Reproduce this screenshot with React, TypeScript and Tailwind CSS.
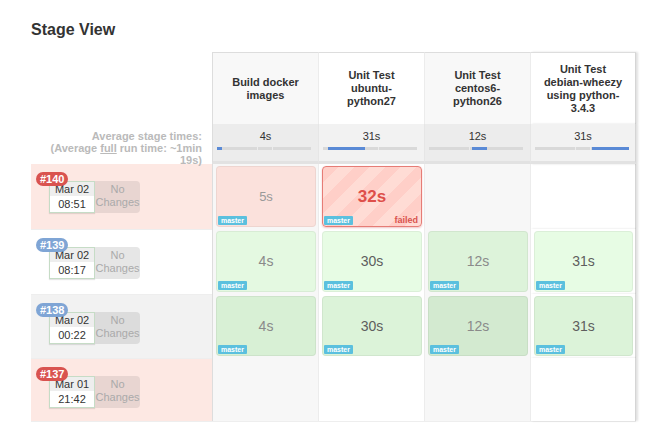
import React from 'react';

type Cell = { t: string; kind: 'empty' | 'ok' | 'failed' | 'faded' };

const stages = [
  'Build docker images',
  'Unit Test ubuntu-python27',
  'Unit Test centos6-python26',
  'Unit Test debian-wheezy using python-3.4.3',
];

const avgs = [
  { t: '4s', off: 0, w: 5 },
  { t: '31s', off: 5, w: 37 },
  { t: '12s', off: 43, w: 15 },
  { t: '31s', off: 57, w: 37 },
];

const runs = [
  {
    id: '#140', date: 'Mar 02', time: '08:51', failed: true, h: 'h-[65px]',
    rowBg: 'bg-[#fde8e3]', noCh: 'bg-[#e8d5d1]',
    cells: [{ t: '5s', kind: 'faded' }, { t: '32s', kind: 'failed' }, { t: '', kind: 'empty' }, { t: '', kind: 'empty' }] as Cell[],
  },
  {
    id: '#139', date: 'Mar 02', time: '08:17', failed: false, h: 'h-[65px]',
    rowBg: 'bg-white', noCh: 'bg-[#e6e6e6]',
    cells: [{ t: '4s', kind: 'ok' }, { t: '30s', kind: 'ok' }, { t: '12s', kind: 'ok' }, { t: '31s', kind: 'ok' }] as Cell[],
  },
  {
    id: '#138', date: 'Mar 02', time: '00:22', failed: false, h: 'h-[64px]',
    rowBg: 'bg-[#f2f2f2]', noCh: 'bg-[#dcdcdc]',
    cells: [{ t: '4s', kind: 'ok' }, { t: '30s', kind: 'ok' }, { t: '12s', kind: 'ok' }, { t: '31s', kind: 'ok' }] as Cell[],
  },
  {
    id: '#137', date: 'Mar 01', time: '21:42', failed: true, h: 'h-[64px]',
    rowBg: 'bg-[#fde8e3]', noCh: 'bg-[#e8d5d1]',
    cells: [{ t: '', kind: 'empty' }, { t: '', kind: 'empty' }, { t: '', kind: 'empty' }, { t: '', kind: 'empty' }] as Cell[],
  },
];

// card colours per run row and column
const okBg = [
  ['', '', '', ''],
  ['bg-[#e4f9e1]', 'bg-[#e7fce4]', 'bg-[#ddf3da]', 'bg-[#e7fce4]'],
  ['bg-[#d8f0d5]', 'bg-[#dcf3d9]', 'bg-[#d3ead0]', 'bg-[#dcf3d9]'],
];

function Master() {
  return (
    <span className="absolute left-[1px] bottom-[1px] bg-[#5bc0de] text-white text-[7px] font-bold leading-[9px] px-[3px] rounded-[1px]">
      master
    </span>
  );
}

function StageCell({ cell, col, row }: { cell: Cell; col: number; row: number }) {
  const colBg = col % 2 === 0 ? 'bg-[#f7f7f7]' : 'bg-white';
  const edge = col === 0 ? 'border-l border-l-[#ddd]' : 'border-l border-l-[#ececec]';
  const right = col === 3 ? 'border-r border-r-[#d5d5d5] shadow-[2px_0_2px_rgba(0,0,0,0.12)]' : '';
  return (
    <div className={`w-[106px] h-full flex p-[2px] pl-[3px] ${colBg} ${edge} ${right}`}>
      {cell.kind === 'faded' && (
        <div className="relative flex-1 rounded-[4px] bg-[#fbe1dc] border border-[rgba(0,0,0,0.05)] flex items-center justify-center text-[13px] text-[#999]">
          {cell.t}
          <Master />
        </div>
      )}
      {cell.kind === 'failed' && (
        <div className="relative flex-1 rounded-[4px] border border-[#e67c76] shadow-[0_1px_2px_rgba(200,60,60,0.3)] bg-[repeating-linear-gradient(135deg,#ffcfc8_0px,#ffcfc8_11px,#ffdcd5_11px,#ffdcd5_22px)] flex items-center justify-center text-[17px] font-bold text-[#de4f4a]">
          {cell.t}
          <Master />
          <span className="absolute right-[3px] bottom-[1px] text-[9px] leading-[10px] text-[#d9534f]">failed</span>
        </div>
      )}
      {cell.kind === 'ok' && (
        <div className={`relative flex-1 rounded-[4px] ${okBg[row][col]} border border-[rgba(0,0,0,0.05)] flex items-center justify-center text-[14px] ${col % 2 === 0 ? 'text-[#8a8a8a]' : 'text-[#5e5e5e]'}`}>
          {cell.t}
          <Master />
        </div>
      )}
    </div>
  );
}

export default function App() {
  return (
    <div className="w-[651px] h-[439px] bg-white pl-[31px] pt-[20px] text-[#333]" style={{ fontFamily: '"Liberation Sans", Arial, Helvetica, sans-serif' }}>
      <h2 className="text-[16px] leading-[20px] font-bold text-[#333]">Stage View</h2>

      <div className="mt-[12px] w-[605px]">
        {/* header */}
        <div className="flex h-[72px]">
          <div className="w-[181px]" />
          {stages.map((s, i) => (
            <div
              key={s}
              className={`w-[106px] flex items-center justify-center text-center px-[8px] text-[11px] leading-[13px] font-bold text-[#333] border-t border-t-[#ddd] ${i % 2 === 0 ? 'bg-[#f8f8f8]' : 'bg-white'} ${i === 0 ? 'border-l border-l-[#ddd]' : 'border-l border-l-[#ececec]'} ${i === 3 ? 'border-r border-r-[#d5d5d5] shadow-[2px_0_2px_rgba(0,0,0,0.12)]' : ''}`}
            >
              {s}
            </div>
          ))}
        </div>

        {/* averages */}
        <div className="flex h-[40px] relative z-10">
          <div className="w-[181px] relative">
            <div className="absolute right-[10px] top-[6px] whitespace-nowrap text-right text-[11px] leading-[12px] font-bold text-[#bababa]">
              Average stage times:
              <br />
              (Average <span className="underline">full</span> run time: ~1min
              <br />
              19s)
            </div>
          </div>
          {avgs.map((a, i) => (
            <div
              key={i}
              className={`w-[106px] pt-[6px] pl-[4px] border-b-[3px] border-b-[#e2e2e2] ${i % 2 === 0 ? 'bg-[#ececec]' : 'bg-[#f2f2f2]'} ${i === 0 ? 'border-l border-l-[#ddd]' : 'border-l border-l-[#e6e6e6]'} ${i === 3 ? 'border-r border-r-[#d5d5d5] shadow-[2px_0_2px_rgba(0,0,0,0.12)]' : ''}`}
            >
              <div className="text-center text-[11px] leading-[13px] text-[#333] pr-[4px]">{a.t}</div>
              <div className="relative mt-[4px] w-[94px] h-[3px] bg-[#d9d9d9]">
                <div className="absolute top-0 left-[40px] w-[1px] h-[3px] bg-[#ececec]" />
                <div className="absolute top-0 left-[55px] w-[1px] h-[3px] bg-[#ececec]" />
                <div className="absolute top-0 h-[3px] bg-[#5a8ad6]" style={{ left: a.off, width: a.w }} />
              </div>
            </div>
          ))}
        </div>

        {/* runs */}
        {runs.map((r, ri) => (
          <div key={r.id} className={`flex ${r.h} ${ri === runs.length - 1 ? 'border-b border-b-[#eee]' : ''}`}>
            <div className={`w-[181px] relative ${r.rowBg} ${ri > 0 ? 'border-t border-t-[#eee]' : ''}`}>
              <div className="flex absolute left-[18px] top-[17px]">
                <div className="w-[46px] h-[32px] border border-[#c6dcc6] shadow-[0_1px_1px_rgba(0,0,0,0.1)] flex flex-col text-[11px] text-[#333]">
                  <div className="h-[14px] bg-[#eeeeee] leading-[14px] text-center">{r.date}</div>
                  <div className="flex-1 bg-white leading-[16px] text-center">{r.time}</div>
                </div>
                <div className={`w-[45px] h-[32px] ${r.noCh} rounded-r-[4px] text-[11px] leading-[13px] text-[#aaa] text-center pt-[2px]`}>
                  No
                  <br />
                  Changes
                </div>
              </div>
              <span className={`absolute left-[5px] top-[8px] h-[14px] px-[4px] rounded-full text-white text-[11px] font-bold leading-[14px] ${r.failed ? 'bg-[#d9534f]' : 'bg-[#7fa5d5]'}`}>
                {r.id}
              </span>
            </div>
            {r.cells.map((c, ci) => (
              <StageCell key={ci} cell={c} col={ci} row={ri} />
            ))}
          </div>
        ))}
      </div>
    </div>
  );
}
